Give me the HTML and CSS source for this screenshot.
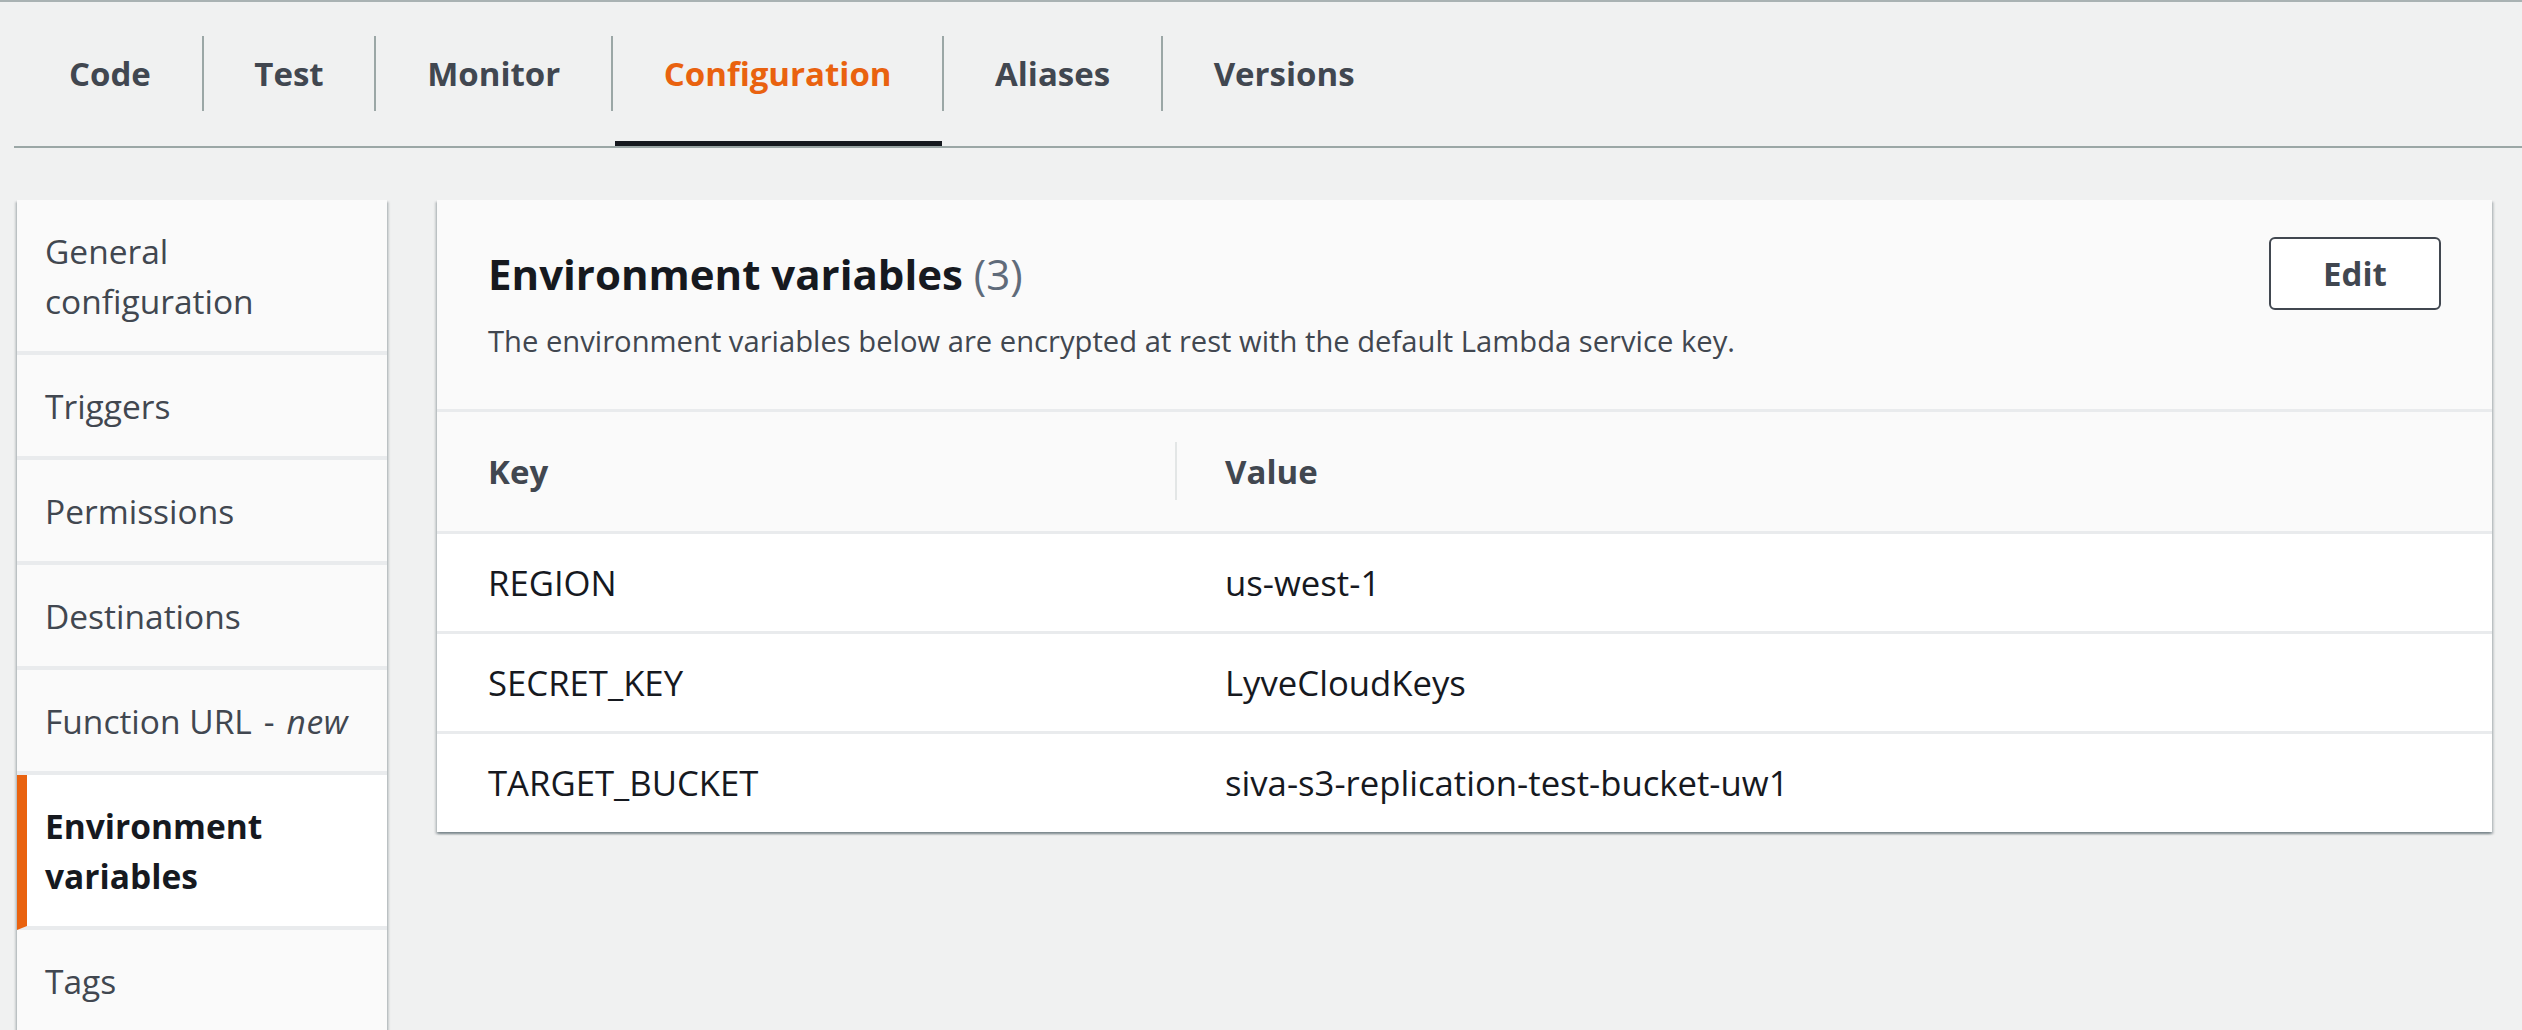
FILE: index.html
```html
<!DOCTYPE html>
<html lang="en">
<head>
<meta charset="utf-8">
<title>Configuration - Environment variables</title>
<link rel="stylesheet" href="styles.css">
</head>
<body>
<div class="page">
  <nav class="tabs">
    <div class="tab"><div class="tab-label first">Code</div><div class="tab-ind"></div></div>
    <div class="tab"><div class="tab-label">Test</div><div class="tab-ind"></div></div>
    <div class="tab"><div class="tab-label">Monitor</div><div class="tab-ind"></div></div>
    <div class="tab active"><div class="tab-label">Configuration</div><div class="tab-ind"></div></div>
    <div class="tab"><div class="tab-label">Aliases</div><div class="tab-ind"></div></div>
    <div class="tab"><div class="tab-label">Versions</div><div class="tab-ind"></div></div>
  </nav>
  <div class="content">
    <aside class="sidenav">
      <div class="nav-item">General configuration</div>
      <div class="nav-item">Triggers</div>
      <div class="nav-item">Permissions</div>
      <div class="nav-item">Destinations</div>
      <div class="nav-item nowrap">Function URL<span class="dash">-</span><em>new</em></div>
      <div class="nav-item active">Environment variables</div>
      <div class="nav-item">Tags</div>
    </aside>
    <section class="card">
      <header class="card-header">
        <div class="card-title-block">
          <h2 class="card-title">Environment variables <span class="count">(3)</span></h2>
          <p class="card-desc">The environment variables below are encrypted at rest with the default Lambda service key.</p>
        </div>
        <button class="btn">Edit</button>
      </header>
      <table class="env-table">
        <colgroup><col class="col-key"><col class="col-val"></colgroup>
        <thead>
          <tr>
            <th class="th-key">Key</th>
            <th class="th-val"><div class="th-inner">Value</div></th>
          </tr>
        </thead>
        <tbody>
          <tr><td class="td-key">REGION</td><td class="td-val">us-west-1</td></tr>
          <tr><td class="td-key">SECRET_KEY</td><td class="td-val">LyveCloudKeys</td></tr>
          <tr><td class="td-key">TARGET_BUCKET</td><td class="td-val">siva-s3-replication-test-bucket-uw1</td></tr>
        </tbody>
      </table>
    </section>
  </div>
</div>
</body>
</html>
```

FILE: styles.css
```css
* { box-sizing: border-box; }
html, body { margin: 0; padding: 0; }
body {
  background: #f0f1f1;
  font-family: "Open Sans", "Noto Sans", "Liberation Sans", sans-serif;
  color: #16191f;
  overflow: hidden;
}
.page {
  border-top: 2px solid #a9b2b3;
  min-height: 100vh;
}
.tabs {
  display: flex;
  margin-left: 14px;
  border-bottom: 2px solid #9ba7a6;
}
.tab {
  display: flex;
  flex-direction: column;
  padding-top: 34px;
}
.tab-label {
  height: 75px;
  display: flex;
  align-items: center;
  padding: 0 50.75px;
  border-left: 2px solid #9ba7a6;
  font-size: 33px;
  font-weight: 700;
  color: #414750;
  white-space: nowrap;
}
.tab-label.first { border-left-color: transparent; padding-left: 53px; }
.tab-ind {
  height: 5px;
  margin-top: 30px;
  margin-left: 4px;
}
.tab.active .tab-label { color: #e9620f; }
.tab.active .tab-ind { background: #16191f; }

.content {
  display: flex;
  align-items: flex-start;
  gap: 50px;
  margin-top: 52px;
  padding: 0 30px 0 17px;
}
.sidenav {
  width: 370px;
  flex: none;
  background: #fafafa;
  box-shadow: 0 2px 2px rgba(0, 28, 36, 0.3), 2px 2px 2px rgba(0, 28, 36, 0.15), -2px 2px 2px rgba(0, 28, 36, 0.15);
}
.nav-item {
  padding: 25.5px 28px;
  font-size: 33.5px;
  line-height: 50px;
  color: #414750;
  border-bottom: 4px solid #e9ebed;
}
.nav-item.nowrap { white-space: nowrap; padding-right: 0; }
.nav-item .dash { padding: 0 12px 0 12px; }
.nav-item em { font-style: italic; letter-spacing: 0.6px; }
.nav-item.active {
  background: #ffffff;
  color: #16191f;
  font-weight: 700;
  border-left: 10px solid #e9620f;
  padding-left: 18px;
}

.card {
  flex: 1;
  background: #ffffff;
  box-shadow: 0 2px 2px rgba(0, 28, 36, 0.3), 2px 2px 2px rgba(0, 28, 36, 0.15), -2px 2px 2px rgba(0, 28, 36, 0.15);
}
.card-header {
  display: flex;
  justify-content: space-between;
  align-items: flex-start;
  padding: 37px 51px 45px 51px;
  background: #fafafa;
  border-bottom: 3px solid #e9ebed;
}
.card-title {
  margin: 0;
  font-size: 42px;
  line-height: 73px;
  font-weight: 700;
  color: #16191f;
}
.count { font-weight: 400; color: #5f6b7a; }
.card-desc {
  margin: 8px 0 0 0;
  font-size: 29.2px;
  line-height: 46px;
  color: #414750;
}
.btn {
  flex: none;
  width: 172px;
  height: 73px;
  border: 2px solid #414750;
  border-radius: 6px;
  background: #ffffff;
  font-family: inherit;
  font-size: 33px;
  font-weight: 700;
  color: #414750;
  padding: 0;
}
.env-table {
  width: 100%;
  border-collapse: collapse;
  table-layout: fixed;
}
.col-key { width: 738px; }
.env-table th {
  height: 120px;
  background: #fafafa;
  text-align: left;
  font-size: 33px;
  font-weight: 700;
  color: #414750;
  border-bottom: 3px solid #e9ebed;
  padding: 0;
  vertical-align: middle;
}
.th-key { padding-left: 51px !important; }
.th-inner {
  height: 58px;
  display: flex;
  align-items: center;
  border-left: 2px solid #e3e6e6;
  padding-left: 48px;
}
.env-table td {
  height: 100px;
  font-size: 34.7px;
  color: #16191f;
  padding: 0;
  vertical-align: middle;
  border-bottom: 3px solid #e9ebed;
}
.env-table tbody tr:last-child td { border-bottom: none; }
.td-key { padding-left: 51px !important; }
.td-val { padding-left: 50px !important; }
```
